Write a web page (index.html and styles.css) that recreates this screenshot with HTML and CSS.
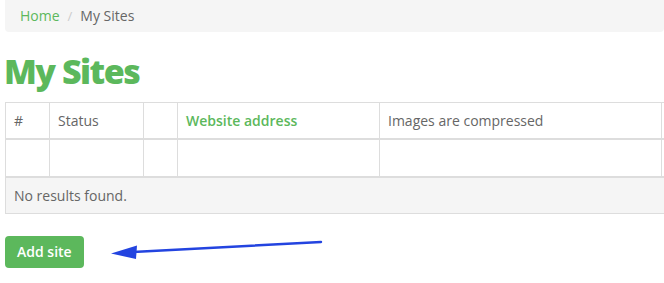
FILE: index.html
```html
<!DOCTYPE html>
<html>
<head>
<title>My Sites</title>
<link rel="stylesheet" href="styles.css">
</head>
<body>

<div class="page">
  <ul class="breadcrumb">
    <li><a href="#">Home</a></li>
    <li class="sep">/</li>
    <li class="active">My Sites</li>
  </ul>

  <h1>My Sites</h1>

  <table class="grid">
    <thead>
      <tr>
        <th class="c-num">#</th>
        <th class="c-status">Status</th>
        <th class="c-blank"></th>
        <th class="c-addr"><a href="#">Website address</a></th>
        <th class="c-img">Images are compressed</th>
        <th class="c-more"></th>
      </tr>
    </thead>
    <tbody>
      <tr class="filters">
        <td></td>
        <td></td>
        <td></td>
        <td></td>
        <td></td>
        <td></td>
      </tr>
      <tr class="empty">
        <td colspan="6">No results found.</td>
      </tr>
    </tbody>
  </table>

  <div class="actions">
    <a href="#" class="btn">Add site</a>
    <svg class="arrow" width="220" height="24" viewBox="0 0 220 24">
      <line x1="212" y1="4" x2="24" y2="14" stroke="#2344e0" stroke-width="2.5" stroke-linecap="round"/>
      <polygon points="2,15.5 28,7.5 27,21" fill="#2344e0"/>
    </svg>
  </div>
</div>

</body>
</html>
```

FILE: styles.css
```css
body {
    margin: 0;
    padding: 0;
    font-family: "Open Sans", sans-serif;
    font-size: 14px;
    color: #555;
    background: #fff;
    overflow: hidden;
}

a {
    color: #5cb85c;
    text-decoration: none;
}

.page {
    padding-left: 5px;
    overflow: hidden;
}

.breadcrumb {
    list-style: none;
    margin: 0;
    padding: 6px 15px;
    height: 20px;
    background-color: #f5f5f5;
    border-radius: 0 0 4px 4px;
    display: flex;
    align-items: center;
    gap: 8px;
    line-height: 20px;
}

.breadcrumb .sep {
    color: #ccc;
    font-size: 13px;
}

.breadcrumb .active {
    color: #666;
}

h1 {
    margin: 19px 0 0 -1px;
    height: 51px;
    font-size: 34px;
    font-weight: 800;
    letter-spacing: -1.5px;
    line-height: 40px;
    color: #5cb85c;
}

/* table */
.grid {
    border-collapse: collapse;
    border: 1px solid #ddd;
    width: 720px;
}

.grid th,
.grid td {
    border: 1px solid #ddd;
    padding: 0 8px;
    text-align: left;
    font-weight: normal;
    color: #666;
}

.grid thead th {
    height: 35px;
    border-bottom-width: 2px;
}

.grid th a {
    font-weight: 600;
}

.c-num { width: 27px; }
.c-status { width: 77px; }
.c-blank { width: 17px; }
.c-addr { width: 185px; }
.c-img { width: 265px; }

.grid .filters td {
    height: 36px;
    border-bottom-width: 2px;
}

.grid .empty td {
    height: 35px;
    background-color: #f5f5f5;
}

.actions {
    margin-top: 22px;
    display: flex;
    align-items: center;
}

.btn {
    display: inline-block;
    background-color: #5cb85c;
    color: #fff;
    font-weight: 600;
    padding: 0 12px;
    height: 32px;
    line-height: 32px;
    border-radius: 4px;
}

.arrow {
    margin-left: 25px;
    margin-top: -4px;
}
```
